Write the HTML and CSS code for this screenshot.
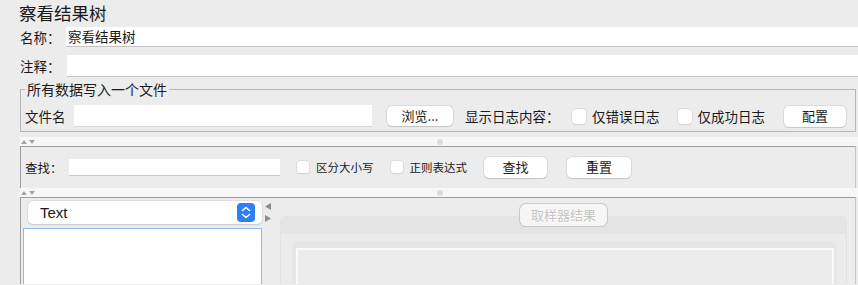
FILE: index.html
```html
<!DOCTYPE html>
<html lang="zh">
<head>
<meta charset="utf-8">
<title>察看结果树</title>
<link rel="stylesheet" href="styles.css">
</head>
<body>
<div class="page">
  <div class="title">察看结果树</div>
  <div class="row name-row">
    <span class="lbl">名称：</span>
    <div class="field">察看结果树</div>
  </div>
  <div class="row comment-row">
    <span class="lbl">注释：</span>
    <div class="field"></div>
  </div>
  <fieldset class="group">
    <legend>所有数据写入一个文件</legend>
    <div class="file-row">
      <span class="file-lbl">文件名</span>
      <div class="input file-input"></div>
      <button class="btn browse">浏览...</button>
      <span class="log-lbl">显示日志内容：</span>
      <label class="check"><span class="box"></span>仅错误日志</label>
      <label class="check ok"><span class="box"></span>仅成功日志</label>
      <button class="btn config">配置</button>
    </div>
  </fieldset>
  <div class="splitter first">
    <svg class="arrows" width="16" height="6" viewBox="0 0 16 6">
      <path d="M1 5 L4 1 L7 5 Z" fill="#a4a4a4"/>
      <path d="M9 1 L15 1 L12 5 Z" fill="#a4a4a4"/>
    </svg>
    <span class="dot"></span>
  </div>
  <div class="panel search">
    <span class="search-lbl">查找：</span>
    <div class="input search-input"></div>
    <label class="check small"><span class="box"></span>区分大小写</label>
    <label class="check small regex"><span class="box"></span>正则表达式</label>
    <button class="btn find">查找</button>
    <button class="btn reset">重置</button>
  </div>
  <div class="splitter second">
    <svg class="arrows" width="16" height="6" viewBox="0 0 16 6">
      <path d="M1 5 L4 1 L7 5 Z" fill="#a4a4a4"/>
      <path d="M9 1 L15 1 L12 5 Z" fill="#a4a4a4"/>
    </svg>
    <span class="dot"></span>
  </div>
  <div class="panel results">
    <div class="left">
      <div class="combo">
        <span>Text</span>
        <span class="stepper">
          <svg width="18" height="19" viewBox="0 0 18 19">
            <rect x="0" y="0" width="18" height="19" rx="4" fill="#2f7ff6"/>
            <path d="M5.5 7.5 L9 4.5 L12.5 7.5" fill="none" stroke="#fff" stroke-width="1.6" stroke-linecap="round" stroke-linejoin="round"/>
            <path d="M5.5 11.5 L9 14.5 L12.5 11.5" fill="none" stroke="#fff" stroke-width="1.6" stroke-linecap="round" stroke-linejoin="round"/>
          </svg>
        </span>
      </div>
      <div class="list"></div>
    </div>
    <div class="hsplit">
      <svg width="8" height="22" viewBox="0 0 8 22">
        <path d="M7 1 L1 4.5 L7 8 Z" fill="#8c8c8c"/>
        <path d="M1 13 L7 16.5 L1 20 Z" fill="#8c8c8c"/>
      </svg>
    </div>
    <div class="right">
      <div class="tab-btn">取样器结果</div>
      <div class="outer">
        <div class="outer-head"></div>
        <div class="inner">
          <div class="innermost"></div>
        </div>
      </div>
    </div>
  </div>
</div>
</body>
</html>
```

FILE: styles.css
```css
* { box-sizing: border-box; }
html, body {
  margin: 0;
  padding: 0;
  background: #ececec;
  height: 285px;
  overflow: hidden;
}
body {
  font-family: "Noto Sans CJK SC", "Liberation Sans", sans-serif;
  color: #1a1a1a;
  width: 858px;
}
.page {
  padding-left: 20px;
}
.title {
  font-size: 17.5px;
  line-height: 25px;
  height: 27px;
  margin-left: -1px;
}
.row {
  display: flex;
  align-items: center;
}
.name-row { height: 20px; }
.comment-row { height: 22px; margin-top: 8px; }
.lbl {
  font-size: 13.5px;
  width: 46px;
  flex: none;
}
.comment-row .lbl { width: 47px; }
.field {
  flex: 1;
  height: 100%;
  background: #fff;
  border-bottom: 1px solid #c2c2c2;
  font-size: 13.5px;
  line-height: 19px;
  padding-left: 2px;
}
.group {
  margin: 4px 2px 0 0;
  padding: 8px 4px 4px 4px;
  border: 1px solid #b6b6b6;
  min-width: 0;
}
.group legend {
  font-size: 14px;
  line-height: 16px;
  padding: 0 2px 0 2px;
  margin-left: 0;
}
.file-row {
  display: flex;
  align-items: center;
  height: 22px;
  font-size: 13.5px;
}
.file-lbl { width: 49px; flex: none; }
.input {
  background: #fff;
  border-bottom: 1px solid #d6d6d6;
}
.file-input { width: 298px; height: 22px; flex: none; }
.btn {
  font-family: "Noto Sans CJK SC", sans-serif;
  font-size: 13px;
  color: #1a1a1a;
  background: #fff;
  border: none;
  border-radius: 5px;
  box-shadow: 0 0 0 0.5px #c8c8c8, 0 1px 1px rgba(0,0,0,0.18);
  padding: 0;
  height: 20px;
  line-height: 20px;
  flex: none;
}
.browse { width: 66px; margin-left: 15px; }
.log-lbl { margin-left: 12px; width: 107px; flex: none; }
.check {
  display: flex;
  align-items: center;
  flex: none;
}
.box {
  width: 14px;
  height: 15px;
  background: #fff;
  border-radius: 4px;
  box-shadow: 0 0 0 0.5px #cfcfcf, 0 0.5px 1px rgba(0,0,0,0.12);
  margin-right: 6px;
}
.check.ok { margin-left: 18px; }
.config { width: 62px; height: 21px; margin-left: 19px; }
.splitter {
  position: relative;
  height: 9px;
  background: #f7f7f7;
  margin-top: 5px;
}
.splitter.second { margin-top: 0; }
.arrows {
  position: absolute;
  left: 0;
  top: 2px;
  display: block;
}
.dot {
  position: absolute;
  left: 417px;
  top: 2px;
  width: 6px;
  height: 6px;
  border-radius: 50%;
  background: #dcdcdc;
}
.panel {
  border-top: 1px solid #9e9e9e;
  border-left: 1px solid #9e9e9e;
  border-right: 1px solid #c6c6c6;
  margin-right: 2px;
}
.search {
  display: flex;
  align-items: center;
  height: 42px;
  padding: 0 0 1px 4px;
  font-size: 12px;
}
.search-lbl { width: 44px; flex: none; font-size: 12.5px; }
.search-input { width: 211px; height: 17px; flex: none; border-bottom-color: #c8c8c8; }
.check.small { margin-left: 17px; font-size: 11.5px; }
.check.small .box { width: 12px; height: 12px; border-radius: 3px; margin-right: 7px; }
.check.small.regex { margin-left: 17px; }
.find { width: 63px; height: 21px; margin-left: 17px; }
.reset { width: 64px; height: 21px; margin-left: 20px; }
.results {
  display: flex;
  height: 87px;
  border-top: 1px solid #9e9e9e;
  overflow: hidden;
}
.left {
  width: 241px;
  flex: none;
  padding: 3px 0 0 2px;
}
.combo {
  margin-left: 5px;
  height: 23px;
  background: #fff;
  border-radius: 5px;
  box-shadow: 0 0 0 0.5px #cfcfcf, 0 1px 1px rgba(0,0,0,0.15);
  display: flex;
  align-items: center;
  justify-content: space-between;
  padding: 0 7px 0 12px;
  font-family: "Liberation Sans", Arial, sans-serif;
  font-size: 15px;
}
.stepper { display: flex; }
.list {
  margin-top: 4px;
  height: 56px;
  background: #fff;
  border: 1px solid #8fbbe8;
  border-bottom: none;
}
.hsplit {
  width: 18px;
  flex: none;
  padding: 4px 0 0 2px;
}
.hsplit svg { display: block; }
.right {
  flex: 1;
  display: flex;
  flex-direction: column;
  align-items: center;
  padding: 6px 8px 0 0;
}
.tab-btn {
  width: 87px;
  height: 22px;
  border-radius: 6px;
  background: #f6f6f6;
  box-shadow: 0 0 0 1px #c9c9c9, 0 1px 1px rgba(0,0,0,0.1);
  color: #c4c4c4;
  text-shadow: 0 1px 0 #fff;
  font-size: 13px;
  line-height: 22px;
  text-align: center;
  position: relative;
  z-index: 1;
}
.outer {
  align-self: stretch;
  margin-top: -10px;
  flex: 1;
  background: #ebebeb;
  border-radius: 6px 6px 0 0;
  border: 1px solid #e2e2e2;
  border-bottom: none;
  padding: 0 9px 0 11px;
}
.outer-head {
  height: 17px;
  background: #e4e4e4;
  margin: 0 -9px 0 -11px;
  border-radius: 6px 6px 0 0;
}
.inner {
  margin-top: 7px;
  height: 43px;
  border-radius: 6px 6px 0 0;
  background: #e6e6e6;
  padding: 7px 3px 0 4px;
}
.innermost {
  height: 36px;
  border: 2px solid #fafafa;
  border-bottom: none;
  background: #ececec;
}
```
